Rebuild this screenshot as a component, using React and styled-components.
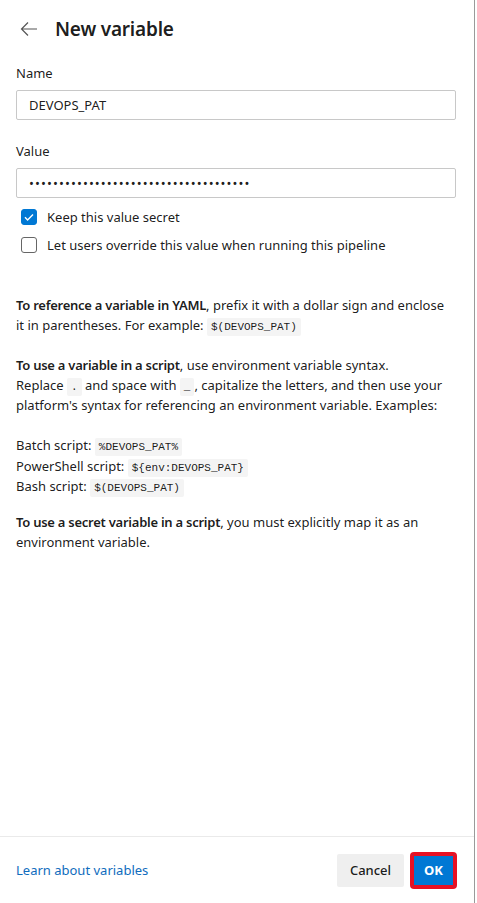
import React, { useState } from 'react';
import styled, { createGlobalStyle } from 'styled-components';

const GlobalStyle = createGlobalStyle`
  html, body {
    margin: 0;
    padding: 0;
    background: #ffffff;
  }
  body {
    font-family: "Noto Sans", "Open Sans", sans-serif;
    color: rgba(0, 0, 0, 0.9);
  }
`;

const Panel = styled.div`
  display: flex;
  flex-direction: column;
  width: 475px;
  height: 903px;
  box-sizing: border-box;
  border-right: 1px solid #9a9a9a;
  background: #ffffff;
`;

const Header = styled.div`
  display: flex;
  align-items: center;
  height: 58px;
  padding: 0 16px 0 20px;
  gap: 17px;
`;

const BackButton = styled.button`
  display: flex;
  align-items: center;
  justify-content: center;
  width: 18px;
  height: 18px;
  padding: 0;
  border: none;
  background: none;
  color: #555;
  cursor: pointer;
`;

const Title = styled.h1`
  margin: 0;
  font-size: 19px;
  font-weight: 600;
  line-height: 28px;
  letter-spacing: -0.2px;
  color: rgba(0, 0, 0, 0.9);
`;

const Body = styled.div`
  flex: 1;
  padding: 5px 19px 0 16px;
`;

const Field = styled.div`
  display: flex;
  flex-direction: column;
  margin-bottom: ${(p) => p.$gap || 0}px;
`;

const Label = styled.label`
  font-size: 13px;
  line-height: 20px;
  margin-bottom: 7px;
  color: rgba(0, 0, 0, 0.9);
`;

const Input = styled.input`
  box-sizing: border-box;
  width: 440px;
  height: 30px;
  padding: 0 12px;
  border: 1px solid #c8c8c8;
  border-radius: 2px;
  font-family: "Noto Sans", sans-serif;
  font-size: 13px;
  letter-spacing: ${(p) => (p.type === 'password' ? '1.1px' : 'normal')};
  color: rgba(0, 0, 0, 0.9);
  outline: none;
`;

const Checks = styled.div`
  display: flex;
  flex-direction: column;
  margin-top: 5px;
  padding-left: 5px;
`;

const CheckRow = styled.label`
  display: flex;
  align-items: center;
  height: 28px;
  gap: 10px;
  font-size: 13px;
  cursor: pointer;
`;

const Box = styled.span`
  display: flex;
  align-items: center;
  justify-content: center;
  box-sizing: border-box;
  width: 16px;
  height: 16px;
  border-radius: 3px;
  border: 1px solid ${(p) => (p.$checked ? '#0078d4' : '#666666')};
  background: ${(p) => (p.$checked ? '#0078d4' : '#ffffff')};
`;

const Help = styled.div`
  margin-top: 36px;
  font-size: 13px;
  line-height: 20px;
  color: rgba(0, 0, 0, 0.9);
`;

const Para = styled.p`
  margin: 0 0 ${(p) => p.$gap ?? 20}px;
  line-height: ${(p) => p.$lh ?? 20}px;
`;

const Strong = styled.b`
  font-weight: 600;
  letter-spacing: -0.25px;
`;

const Code = styled.code`
  font-family: "Liberation Mono", "DejaVu Sans Mono", monospace;
  font-size: 11px;
  line-height: 14px;
  background: #f4f4f4;
  padding: 3px 4px;
  border-radius: 2px;
`;

const Footer = styled.div`
  display: flex;
  align-items: center;
  justify-content: space-between;
  height: 67px;
  padding: 0 19px 0 16px;
  border-top: 1px solid #eaeaea;
  box-sizing: border-box;
`;

const Link = styled.a`
  font-size: 13px;
  color: #0f6cbd;
  text-decoration: none;
`;

const Actions = styled.div`
  display: flex;
  gap: 8px;
`;

const Button = styled.button`
  height: 33px;
  padding: 0 ${(p) => (p.$primary ? 12 : 13)}px;
  border: none;
  border-radius: 2px;
  font-family: "Noto Sans", sans-serif;
  font-size: 13px;
  font-weight: ${(p) => (p.$primary ? 700 : 500)};
  color: ${(p) => (p.$primary ? '#ffffff' : 'rgba(0,0,0,0.9)')};
  background: ${(p) => (p.$primary ? '#0078d4' : '#efefef')};
  box-shadow: ${(p) =>
    p.$primary ? '0 0 0 2px #e81123, inset 0 0 0 2px #e81123' : 'none'};
  cursor: pointer;
`;

const ArrowLeft = () => (
  <svg width="18" height="18" viewBox="0 0 18 18" fill="none" stroke="currentColor" strokeWidth="1.2">
    <path d="M17 9H1.5M8 2.5L1.5 9L8 15.5" />
  </svg>
);

const Check = () => (
  <svg width="12" height="12" viewBox="0 0 12 12" fill="none" stroke="#fff" strokeWidth="1.4">
    <path d="M2 6.3l2.6 2.6L10 3.5" />
  </svg>
);

export default function App() {
  const [secret, setSecret] = useState(true);
  const [override, setOverride] = useState(false);

  return (
    <>
      <GlobalStyle />
      <Panel>
        <Header>
          <BackButton aria-label="Back">
            <ArrowLeft />
          </BackButton>
          <Title>New variable</Title>
        </Header>
        <Body>
          <Field $gap={21}>
            <Label>Name</Label>
            <Input defaultValue="DEVOPS_PAT" />
          </Field>
          <Field>
            <Label>Value</Label>
            <Input type="password" defaultValue={'x'.repeat(37)} />
          </Field>
          <Checks>
            <CheckRow onClick={() => setSecret(!secret)}>
              <Box $checked={secret}>{secret && <Check />}</Box>
              Keep this value secret
            </CheckRow>
            <CheckRow onClick={() => setOverride(!override)}>
              <Box $checked={override}>{override && <Check />}</Box>
              Let users override this value when running this pipeline
            </CheckRow>
          </Checks>
          <Help>
            <Para>
              <Strong>To reference a variable in YAML</Strong>, prefix it with a dollar sign and enclose
              it in parentheses. For example: <Code>$(DEVOPS_PAT)</Code>
            </Para>
            <Para>
              <Strong>To use a variable in a script</Strong>, use environment variable syntax.
              <br />
              Replace <Code>.</Code> and space with <Code>_</Code>, capitalize the letters, and then
              use your platform's syntax for referencing an environment variable. Examples:
            </Para>
            <Para $gap={15} $lh={20.5}>
              Batch script: <Code>%DEVOPS_PAT%</Code>
              <br />
              PowerShell script: <Code>{'${env:DEVOPS_PAT}'}</Code>
              <br />
              Bash script: <Code>$(DEVOPS_PAT)</Code>
            </Para>
            <Para>
              <Strong>To use a secret variable in a script</Strong>, you must explicitly map it as an
              environment variable.
            </Para>
          </Help>
        </Body>
        <Footer>
          <Link href="#">Learn about variables</Link>
          <Actions>
            <Button>Cancel</Button>
            <Button $primary>OK</Button>
          </Actions>
        </Footer>
      </Panel>
    </>
  );
}
